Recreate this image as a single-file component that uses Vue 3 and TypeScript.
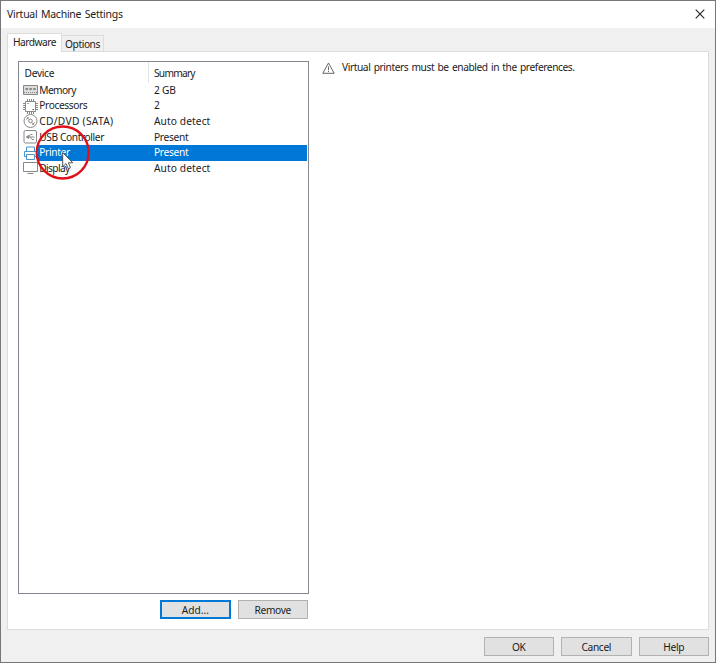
<script setup lang="ts">
interface Device {
  icon: 'memory' | 'cpu' | 'disc' | 'usb' | 'printer' | 'display'
  name: string
  summary: string
  nameSpacing: number
  summarySpacing: number
}

const devices: Device[] = [
  { icon: 'memory', name: 'Memory', summary: '2 GB', nameSpacing: -0.6, summarySpacing: -0.2 },
  { icon: 'cpu', name: 'Processors', summary: '2', nameSpacing: -0.4, summarySpacing: 0 },
  { icon: 'disc', name: 'CD/DVD (SATA)', summary: 'Auto detect', nameSpacing: 0.3, summarySpacing: 0.1 },
  { icon: 'usb', name: 'USB Controller', summary: 'Present', nameSpacing: -0.4, summarySpacing: -0.3 },
  { icon: 'printer', name: 'Printer', summary: 'Present', nameSpacing: -0.35, summarySpacing: -0.3 },
  { icon: 'display', name: 'Display', summary: 'Auto detect', nameSpacing: -0.65, summarySpacing: 0.1 },
]
const selected = 'printer'
</script>

<template>
  <div class="window">
    <header class="titlebar">
      <span class="title">Virtual Machine Settings</span>
      <svg class="close" width="10" height="10" viewBox="0 0 10 10"><path d="M.7.7 9.3 9.3M9.3.7.7 9.3" /></svg>
    </header>
    <nav class="tabs">
      <span class="tab active">Hardware</span>
      <span class="tab">Options</span>
    </nav>
    <main class="page">
      <section class="left">
        <div class="list">
          <div class="row head"><span class="name">Device</span><span class="summary">Summary</span></div>
          <div v-for="d in devices" :key="d.icon" class="row" :class="{ selected: d.icon === selected }">
            <svg class="icon" width="16" height="16" viewBox="0 0 16 16">
              <template v-if="d.icon === 'memory'">
                <path class="soft" d="M.5 3.5h14v9H.5z" />
                <path d="M.5 3.5h14v9H.5z" />
                <path d="M2.500 6h2.500v2H2.500zM6.300 6h2.500v2H6.300zM10.200 6h2.500v2h-2.500z" fill="#888" stroke="none" />
                <path d="M1 10.500h14" stroke-dasharray="1 1" />
              </template>
              <template v-else-if="d.icon === 'cpu'">
                <path d="M2.500 3.500h10v10h-10z" />
                <path d="M4.500 1v2M6.500 1v2M8.500 1v2M10.500 1v2M4.500 14v2M6.500 14v2M8.500 14v2M10.500 14v2M0 5.500h2M0 7.500h2M0 9.500h2M0 11.500h2M13 5.500h2M13 7.500h2M13 9.500h2M13 11.500h2" />
                <path d="M4.500 5.500h1M9.500 11.500H11" stroke="#555" />
              </template>
              <template v-else-if="d.icon === 'disc'">
                <circle cx="7.500" cy="8" r="6.500" />
                <circle cx="7.500" cy="8" r="1.800" />
                <path d="M3.500 6.500 5.500 4M9.500 12l2-2.500M4 4l2 2.500M9 9.500l2 2.500" />
              </template>
              <template v-else-if="d.icon === 'usb'">
                <rect x="1" y="1.500" width="12.500" height="12.500" rx="1.500" />
                <path d="M3.500 8h8M5.500 8l2-2.500h2M7 8l2 2.500h2" />
                <path d="m5.500 6.500-2 1.500 2 1.500z" fill="#888" />
              </template>
              <g v-else-if="d.icon === 'printer'" class="blue">
                <path d="M3.500 6V2h8v4M3.500 11.500h-2v-5h12v5h-2M3.500 9.500h8v5h-8z" />
              </g>
              <path v-else d="M.5 2.500h14v9H.5zM4.500 13.500h6" />
            </svg>
            <span class="name"><span :style="{ letterSpacing: d.nameSpacing + 'px' }">{{ d.name }}</span></span>
            <span class="summary" :style="{ letterSpacing: d.summarySpacing + 'px' }">{{ d.summary }}</span>
          </div>
          <div class="pointer">
            <svg width="56" height="56" viewBox="0 0 56 56">
              <circle cx="27.700" cy="27.500" r="26" fill="none" stroke="#e01018" stroke-width="2.300" />
              <path d="M27.700 27.500v14.200l3.300-3.100 2.300 5.100 2.200-1-2.200-4.900h4.500z" fill="#fff" stroke="#444" stroke-width=".9" />
            </svg>
          </div>
        </div>
        <div class="actions">
          <button class="default">Add...</button>
          <button>Remove</button>
        </div>
      </section>
      <section class="notice">
        <svg width="13" height="12" viewBox="0 0 13 12"><path d="M6.500 1 12.200 11.300H.8zM6.500 4.500v3.700M6.500 9v1" /></svg>
        <span class="message">Virtual printers must be enabled in the preferences.</span>
      </section>
    </main>
    <footer class="footer">
      <button>OK</button>
      <button>Cancel</button>
      <button>Help</button>
    </footer>
  </div>
</template>

<style>
body { margin: 0; overflow: hidden; }
</style>

<style scoped>
.window {
  box-sizing: border-box;
  width: 716px;
  height: 663px;
  display: flex;
  flex-direction: column;
  border: 1px solid #777;
  background: #f0f0f0;
  color: #1c1c1c;
  font: 10.2px/15.7px "Noto Sans", "Open Sans", sans-serif;
}
.titlebar {
  height: 27px;
  flex: none;
  display: flex;
  align-items: center;
  justify-content: space-between;
  padding: 0 10px 0 6px;
  background: #fff;
}
.title { font-size: 10.5px; letter-spacing: -.25px; word-spacing: 1px; }
svg { display: block; fill: none; }
.close { stroke: #222; stroke-width: 1.1; position: relative; top: -.5px; }
.tabs {
  display: flex;
  flex: none;
  align-items: flex-end;
  height: 18px;
  padding: 5px 0 0 6px;
}
.tab {
  box-sizing: border-box;
  width: 42px;
  height: 16px;
  border: 1px solid #dcdcdc;
  border-bottom: 0;
  border-left: 0;
  text-align: center;
  letter-spacing: -.42px;
  line-height: 16.5px;
}
.tab.active {
  position: relative;
  width: 55px;
  height: 19px;
  margin-bottom: -1px;
  border-left: 1px solid #dcdcdc;
  background: #fff;
  line-height: 17px;
  letter-spacing: -.5px;
}
.page {
  box-sizing: border-box;
  flex: none;
  display: flex;
  align-items: flex-start;
  gap: 13px;
  width: 702px;
  height: 579px;
  margin-left: 6px;
  padding: 9px 10px;
  border: 1px solid #dcdcdc;
  background: #fff;
}
.left { flex: none; width: 291px; }
.list {
  position: relative;
  box-sizing: border-box;
  height: 533px;
  border: 1px solid #828790;
}
.row {
  display: flex;
  height: 15.7px;
  line-height: 15.5px;
  padding-right: 1px;
}
.icon { flex: none; width: 16px; height: 16px; margin: -.5px 0 0 4px; stroke: #888; stroke-width: 1; }
.soft { fill: #ddd; stroke: none; }
.blue { stroke: #4a97cc; fill: #fff; }
.name { flex: none; width: 110px; white-space: nowrap; padding-left: 1.3px; box-sizing: border-box; margin-left: -1px; }
.summary { flex: 1; padding-left: 6px; }
.head { height: 20.5px; line-height: 22px; }
.head .name { width: 130px; margin: 0; padding-left: 5.5px; border-right: 1px solid #e3e3e3; letter-spacing: -.3px; }
.head .summary { padding-left: 5px; letter-spacing: -.75px; }
.selected .name, .selected .summary { background: #0078d7; color: #fff; }
.pointer { position: absolute; left: 16px; top: 63px; }
.actions { display: flex; justify-content: flex-end; gap: 7px; padding: 6px 1px 0 0; }
button {
  box-sizing: border-box;
  width: 70.5px;
  height: 19px;
  margin: 0;
  padding: 0;
  border: 1px solid #b2b2b2;
  border-radius: 0;
  background: #e1e1e1;
  color: #1c1c1c;
  font: inherit;
  line-height: 16px;
  letter-spacing: -.35px;
}
.default { border: 2px solid #0078d7; line-height: 14px; letter-spacing: 0; }
.notice { display: flex; gap: 7px; padding-top: 1px; }
.notice svg { flex: none; stroke: #666; stroke-width: 1; }
.message { line-height: 11px; letter-spacing: -.41px; word-spacing: 1px; white-space: nowrap; }
.footer { display: flex; justify-content: flex-end; gap: 7px; padding: 7px 6px 0 0; }
</style>
